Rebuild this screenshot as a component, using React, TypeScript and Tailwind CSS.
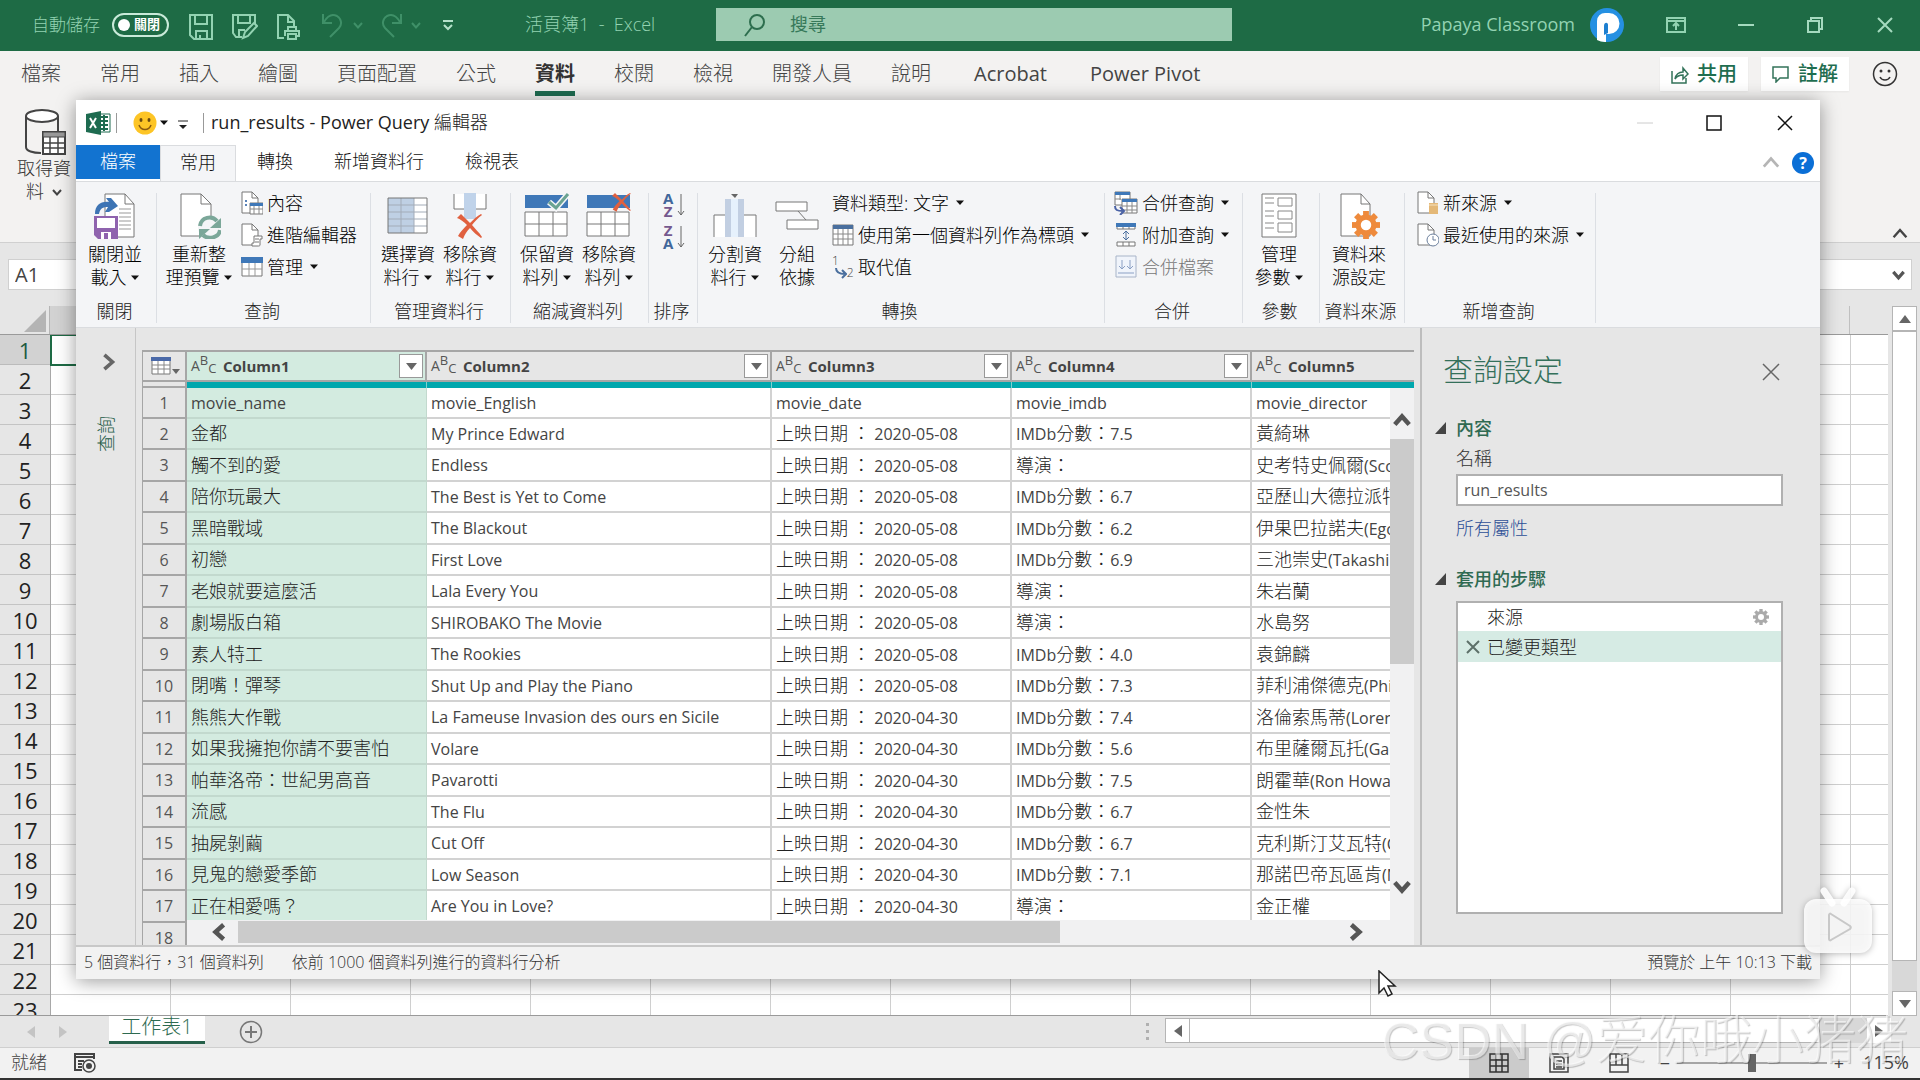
import React from "react";

const Caret = () => (
  <svg width="10" height="6" viewBox="0 0 10 6" className="inline-block shrink-0 align-middle" aria-hidden="true">
    <path d="M1 0.5h8L5 5z" fill="#111" />
  </svg>
);

const Chevron = ({ dir, size, color, width }: { dir: "up" | "down" | "left" | "right"; size: number; color: string; width: number }) => {
  const d = { up: "M2 14l8-9 8 9", down: "M2 6l8 9 8-9", left: "M14 2l-9 8 9 8", right: "M6 2l9 8-9 8" }[dir];
  return (
    <svg width={size} height={size} viewBox="0 0 20 20" fill="none" stroke={color} strokeWidth={width} className="shrink-0" aria-hidden="true">
      <path d={d} />
    </svg>
  );
};

const Tri = ({ dir, color = "#666" }: { dir: "up" | "down" | "left" | "right"; color?: string }) => {
  const d = { up: "M0 10L6 2l6 8z", down: "M0 2h12L6 10z", left: "M10 0v12L2 6z", right: "M2 0v12l8-6z" }[dir];
  return (
    <svg width="12" height="12" viewBox="0 0 12 12" className="shrink-0" aria-hidden="true">
      <path d={d} fill={color} />
    </svg>
  );
};

const Icon = ({ w, h, children }: { w: number; h: number; children: React.ReactNode }) => (
  <svg width={w} height={h} viewBox={`0 0 ${w} ${h}`} fill="none" className="shrink-0" aria-hidden="true">
    {children}
  </svg>
);

/* ---------- Excel title bar ---------- */

const titleIcons = [
  {
    name: "儲存",
    icon: (
      <Icon w={24} h={26}>
        <path d="M1 1h22v24H5l-4-4zM6 1v9h12V1M7 25v-8h11v8M11 25v-4" stroke="#93d3b2" strokeWidth="2" />
      </Icon>
    ),
  },
  {
    name: "另存新檔",
    icon: (
      <Icon w={26} h={26}>
        <path d="M10 23H4l-3-4V1h22v9M6 1v8h12V1M7 23v-7h6" stroke="#93d3b2" strokeWidth="2" />
        <path d="M11 24l2-6 9-9 3 3-9 10z" stroke="#93d3b2" strokeWidth="2" />
      </Icon>
    ),
  },
  {
    name: "預覽列印",
    icon: (
      <Icon w={24} h={26}>
        <path d="M7 24H1V1h10l6 6v5M11 1v7h6" stroke="#93d3b2" strokeWidth="2" />
        <path d="M11 17v-4h8v4M8 22v-5h14v5h-3M11 20h8v5h-8z" stroke="#93d3b2" strokeWidth="2" />
      </Icon>
    ),
  },
];

function TitleBar() {
  return (
    <header className="flex h-[51px] shrink-0 items-center bg-[#1e6b45] pb-[2px] pl-8 text-[18px] text-[#93d3b2]">
      <span className="text-[17px] font-light">自動儲存</span>
      <button aria-label="自動儲存 關閉" className="ml-3 flex h-6 w-[57px] items-center gap-1 rounded-full border-2 border-[#c9ead9] pl-1 text-[13px] leading-none font-bold text-white">
        <span className="size-3 rounded-full bg-white" />
        關閉
      </button>
      <div className="ml-5 flex items-center gap-[19px] pt-1">
        {titleIcons.map((t) => (
          <button key={t.name} aria-label={t.name}>
            {t.icon}
          </button>
        ))}
      </div>
      <button aria-label="復原" className="ml-5 flex items-center gap-2">
        <Icon w={24} h={26}>
          <path d="M2 2v9h9M3 10c4-7 9-8 13-6 5 3 5 9 2 12l-9 9" stroke="#3f9068" strokeWidth="2" />
        </Icon>
        <Chevron dir="down" size={10} color="#3f9068" width={4} />
      </button>
      <button aria-label="取消復原" className="ml-4 flex items-center gap-2">
        <Icon w={24} h={26}>
          <path d="M22 2v9h-9M21 10C17 3 12 2 8 4c-5 3-5 9-2 12l9 9" stroke="#3f9068" strokeWidth="2" />
        </Icon>
        <Chevron dir="down" size={10} color="#3f9068" width={4} />
      </button>
      <button aria-label="自訂快速存取工具列" className="ml-5">
        <Icon w={14} h={12}>
          <path d="M2 2h10M3 6l4 4 4-4" stroke="#b5e2cb" strokeWidth="2" />
        </Icon>
      </button>
      <span className="ml-[70px] w-[191px] font-light whitespace-pre">活頁簿1  -  Excel</span>
      <label className="flex h-[33px] w-[516px] items-center bg-[#9ccbb1] pl-7">
        <Icon w={22} h={24}>
          <circle cx="13" cy="9" r="7" stroke="#2d6e4e" strokeWidth="2" />
          <path d="M8 14l-7 9" stroke="#2d6e4e" strokeWidth="2" />
        </Icon>
        <input aria-label="搜尋" placeholder="搜尋" className="ml-6 min-w-0 flex-1 bg-transparent outline-none placeholder:text-[#37795a]" />
      </label>
      <span className="ml-auto">Papaya Classroom</span>
      <svg width="36" height="36" viewBox="0 0 36 36" className="ml-[14px] shrink-0" aria-hidden="true">
        <circle cx="18" cy="18" r="17" fill="#2590e2" />
        <path d="M8 33V14a8 8 0 0 1 8-8h4a10 10 0 0 1 0 21h-3v8a17 17 0 0 1-9-2z" fill="#fff" />
        <path d="M15 28v-9c0-4 4-4 4-1v8z" fill="#1d7fd0" />
      </svg>
      <div className="ml-[41px] flex items-center pr-[27px]">
        <button aria-label="功能區顯示選項" className="w-[20px]">
          <Icon w={20} h={16}>
            <path d="M1 1h18v14H1zM1 4h18M10 13V6M7 9l3-3 3 3" stroke="#93d3b2" strokeWidth="2" />
          </Icon>
        </button>
        <button aria-label="最小化" className="ml-[52px] w-4">
          <Icon w={16} h={16}>
            <path d="M0 8h16" stroke="#a5dabf" strokeWidth="2" />
          </Icon>
        </button>
        <button aria-label="還原" className="ml-[53px] w-4">
          <Icon w={16} h={16}>
            <path d="M1 4h11v11H1zM4 4V1h11v11h-3" stroke="#a5dabf" strokeWidth="2" />
          </Icon>
        </button>
        <button aria-label="關閉" className="ml-[54px] w-4">
          <Icon w={16} h={16}>
            <path d="M1 1l14 14M15 1L1 15" stroke="#a5dabf" strokeWidth="2" />
          </Icon>
        </button>
      </div>
    </header>
  );
}

/* ---------- Excel ribbon ---------- */

const excelTabs = ["檔案", "常用", "插入", "繪圖", "頁面配置", "公式", "資料", "校閱", "檢視", "開發人員", "說明"];
const addInTabs = ["Acrobat", "Power Pivot"];

function ExcelRibbon() {
  return (
    <div className="flex h-[192px] shrink-0 flex-col border-b border-[#d0d0d0] bg-[#f3f2f1]">
      <nav className="flex h-[46px] items-center pr-[22px] pl-[21px] text-[20px] text-[#444]">
        <div className="flex h-full gap-[39px]">
          {excelTabs.map((t) => (
            <button
              key={t}
              className={
                t === "資料"
                  ? "h-[45px] border-b-[5px] border-[#1e6b50] pt-[5px] leading-8 font-bold text-[#333]"
                  : "h-[45px] border-b-[5px] border-transparent pt-[5px] leading-8 font-light"
              }
            >
              {t}
            </button>
          ))}
          {addInTabs.map((t) => (
            <button key={t} className="ml-1 h-[45px] border-b-[5px] border-transparent pt-[5px] leading-8">
              {t}
            </button>
          ))}
        </div>
        <button className="ml-auto flex h-[34px] items-center gap-2 bg-white px-[11px] font-medium text-[#1f6e50] shadow-xs">
          <Icon w={18} h={20}>
            <path d="M1 7v12h14v-5M4 15c1-5 4-7 8-7V4l5 6-5 5v-4c-4 0-6 1-8 4z" stroke="#33735a" strokeWidth="1.5" />
          </Icon>
          共用
        </button>
        <button className="ml-[13px] flex h-[34px] items-center gap-2 bg-white px-[11px] font-medium text-[#1f6e50] shadow-xs">
          <Icon w={18} h={18}>
            <path d="M1 2h15v11H8l-4 4v-4H1z" stroke="#33735a" strokeWidth="1.5" />
          </Icon>
          註解
        </button>
        <button aria-label="意見反應" className="ml-[23px]">
          <Icon w={26} h={26}>
            <circle cx="13" cy="13" r="11.5" stroke="#333" strokeWidth="1.5" />
            <circle cx="9" cy="10" r="1.5" fill="#333" />
            <circle cx="17" cy="10" r="1.5" fill="#333" />
            <path d="M8 16c2 4 8 4 10 0" stroke="#333" strokeWidth="1.5" />
          </Icon>
        </button>
      </nav>
      <div className="flex flex-1 items-start justify-between pt-3 pr-3 pl-4">
        <button className="flex w-14 flex-col items-center text-[18px] leading-[23px] font-light text-[#333]">
          <Icon w={44} h={48}>
            <path d="M4 7v31c0 4 7 6 15 6M36 7v17" stroke="#444" strokeWidth="2" />
            <ellipse cx="20" cy="7" rx="16" ry="6" stroke="#444" strokeWidth="2" fill="#fff" />
            <path d="M21 23h22v22H21z" fill="#fff" stroke="#444" strokeWidth="2" />
            <path d="M21 23h22v5H21z" fill="#999" stroke="#444" />
            <path d="M21 34h22M21 39h22M28 28v17M36 28v17" stroke="#444" strokeWidth="1.5" />
          </Icon>
          <span className="whitespace-nowrap">取得資</span>
          <span className="flex items-center gap-2">
            料 <Chevron dir="down" size={10} color="#444" width={4} />
          </span>
        </button>
        <button aria-label="摺疊功能區" className="self-end">
          <Chevron dir="up" size={16} color="#444" width={3} />
        </button>
      </div>
    </div>
  );
}

const sheetRows = Array.from({ length: 23 }, (_, i) => i + 1);

function Sheet() {
  return (
    <main className="flex min-h-0 flex-1 flex-col bg-[#e6e6e6]">
      <div className="flex h-[63px] shrink-0 items-start px-2 pt-4">
        <input aria-label="名稱方塊" defaultValue="A1" className="h-[31px] w-[160px] border border-[#d0d0d0] bg-white pl-[6px] text-[20px] text-[#444]" />
        <div className="ml-2 flex h-[31px] flex-1 items-center justify-end border border-[#d0d0d0] bg-white pr-[6px]">
          <Chevron dir="down" size={13} color="#555" width={5} />
        </div>
      </div>
      <div className="flex min-h-0 flex-1">
        <div className="flex min-w-0 flex-1 flex-col">
          <div className="flex h-[29px] shrink-0 border-b border-[#9a9a9a]">
            <div className="flex w-[50px] items-end justify-end border-r border-[#b5b5b5] pr-[3px] pb-[2px]">
              <svg width="22" height="22" viewBox="0 0 22 22" aria-hidden="true">
                <path d="M22 0v22H0z" fill="#b4b4b4" />
              </svg>
            </div>
            <div className="w-[120px] bg-[#d2d2d2]" />
            <div className="flex-1 bg-[linear-gradient(to_right,transparent_119px,#c0c0c0_119px)] bg-[size:120px_30px]" />
          </div>
          <div className="flex min-h-0 flex-1 overflow-hidden border-b border-[#9a9a9a]">
            <div className="w-[51px] shrink-0 border-r border-[#a8a8a8]">
              {sheetRows.map((n) => (
                <div
                  key={n}
                  className={
                    n === 1
                      ? "h-[30px] border-b border-[#bbb] bg-[#d2d2d2] text-center text-[22px] leading-[30px] text-[#1e5b40]"
                      : "h-[30px] border-b border-[#c4c4c4] text-center text-[22px] leading-[30px] text-[#222]"
                  }
                >
                  {n}
                </div>
              ))}
            </div>
            <div className="relative flex-1 bg-white">
              <div className="h-full bg-[linear-gradient(to_right,transparent_119px,#cfcfcf_119px),linear-gradient(to_bottom,transparent_29px,#cfcfcf_29px)] bg-[size:120px_30px]" />
              <div className="absolute -top-px -left-px h-8 w-[122px] border-2 border-[#1e6b45]" />
            </div>
          </div>
        </div>
        <div className="ml-1 flex w-[25px] shrink-0 flex-col">
          <div className="flex h-[25px] items-center justify-center border border-[#b5b5b5] bg-white">
            <Tri dir="up" />
          </div>
          <div className="flex-1 border border-[#b5b5b5] bg-white" />
          <div className="h-[30px] bg-[#d8d8d8]" />
          <div className="flex h-[25px] items-center justify-center border border-[#b5b5b5] bg-white">
            <Tri dir="down" />
          </div>
        </div>
        <div className="w-[3px]" />
      </div>
      <div className="flex h-[31px] shrink-0 items-start">
        <div className="flex h-full w-[109px] items-center gap-5 pl-[25px]">
          <Tri dir="left" color="#c4c4c4" />
          <Tri dir="right" color="#c4c4c4" />
        </div>
        <button className="h-7 w-24 border-b-[3px] border-[#26604a] bg-white pb-1 text-[20px] leading-5 font-light text-[#2d6a50]">工作表1</button>
        <button aria-label="新工作表" className="ml-[34px] self-center">
          <Icon w={24} h={24}>
            <circle cx="12" cy="12" r="10.5" stroke="#777" strokeWidth="1.5" />
            <path d="M6 12h12M12 6v12" stroke="#777" strokeWidth="2" />
          </Icon>
        </button>
        <div className="ml-auto flex w-[776px] items-center">
          <Icon w={8} h={24}>
            <path d="M2 5h3v3H2zM2 12h3v3H2zM2 19h3v3H2z" fill="#b0b0b0" />
          </Icon>
          <div className="mt-[2px] ml-[13px] flex h-[25px] flex-1 items-stretch pr-[29px]">
            <div className="flex w-[25px] items-center justify-center border border-[#b5b5b5] bg-white">
              <Tri dir="left" />
            </div>
            <div className="flex-1 border border-l-0 border-[#b5b5b5] bg-white" />
            <div className="w-[47px] bg-[#d8d8d8]" />
            <div className="flex w-6 items-center justify-center bg-white">
              <Tri dir="right" />
            </div>
          </div>
        </div>
      </div>
    </main>
  );
}

function ExcelStatus() {
  return (
    <footer className="flex h-[33px] shrink-0 items-stretch border-t border-b-2 border-t-[#cfcfcf] border-b-[#333] bg-[#f2f2f2] pr-[11px] pl-[11px] text-[18px] leading-[29px] text-[#444]">
      <span className="font-light">就緒</span>
      <button aria-label="巨集錄製" className="ml-[27px]">
        <Icon w={22} h={20}>
          <path d="M8 17H1V1h19v5M1 4h19M4 8h6M4 11h4M4 14h4" stroke="#444" strokeWidth="2" />
          <circle cx="15" cy="13" r="6" stroke="#444" strokeWidth="1.5" />
          <circle cx="15" cy="13" r="3" fill="#444" />
        </Icon>
      </button>
      <button aria-label="標準模式" className="ml-auto flex w-[60px] items-center justify-center bg-[#cbcbcb]">
        <Icon w={20} h={20}>
          <path d="M1 1h18v18H1zM7 1v18M13 1v18M1 7h18M1 13h18" stroke="#333" strokeWidth="1.5" />
        </Icon>
      </button>
      <button aria-label="整頁模式" className="flex w-[60px] items-center justify-center">
        <Icon w={20} h={20}>
          <path d="M1 1h18v18H1zM5 4h8l2 2v10H5zM7 8h6M7 11h6M7 14h6" stroke="#444" strokeWidth="1.5" />
        </Icon>
      </button>
      <button aria-label="分頁預覽" className="flex w-[60px] items-center justify-center">
        <Icon w={20} h={20}>
          <path d="M1 1h18v18H1zM1 12h18M7 1v11M13 1v11" stroke="#444" strokeWidth="1.5" />
        </Icon>
      </button>
      <button aria-label="縮小" className="ml-2 w-4 text-center">
        −
      </button>
      <input
        type="range"
        aria-label="顯示比例"
        min={0}
        max={100}
        defaultValue={50}
        className="mx-1 my-auto h-[2px] w-[150px] appearance-none bg-[#a5a5a5] [&::-webkit-slider-thumb]:h-[18px] [&::-webkit-slider-thumb]:w-2 [&::-webkit-slider-thumb]:appearance-none [&::-webkit-slider-thumb]:bg-[#666]"
      />
      <button aria-label="放大" className="w-4 text-center">
        +
      </button>
      <span className="w-[62px] text-right">115%</span>
    </footer>
  );
}

/* ---------- Power Query ribbon icons ---------- */

const CloseLoad = () => (
  <Icon w={44} h={46}>
    <path d="M12 1h20l9 10v33H12z" fill="#fff" stroke="#777" />
    <path d="M32 1v10h9" stroke="#777" />
    <path d="M26 16h12M26 20h12M26 24h12M26 28h12M26 32h12M26 36h12" stroke="#999" />
    <path d="M2 21c0-9 6-13 14-12l-3-4h5l7 8-9 6h-4l3-5c-5 0-8 1-9 7z" fill="#3d74b4" />
    <path d="M1 23h24v23H5l-4-4z" fill="#8f63ae" />
    <path d="M4 25h18v10H4zM8 39h10v7H8z" fill="#fff" />
    <path d="M11 40h4v6h-4z" fill="#8f63ae" />
  </Icon>
);
const Refresh = () => (
  <Icon w={44} h={46}>
    <path d="M4 1h20l10 10v32H4z" fill="#fff" stroke="#777" />
    <path d="M24 1v10h10" stroke="#777" />
    <circle cx="33" cy="35" r="12" fill="#f4f5f7" />
    <path d="M23 33c1-9 12-11 17-5" stroke="#7ba799" strokeWidth="4" />
    <path d="M44 25v10H33z" fill="#7ba799" />
    <path d="M43 37c-1 8-12 10-17 5" stroke="#7ba799" strokeWidth="4" />
    <path d="M22 46V36h11z" fill="#7ba799" />
  </Icon>
);
const ChooseCols = () => (
  <Icon w={44} h={46}>
    <path d="M2 5h39v35H2z" fill="#fff" />
    <path d="M2 5h26v35H2z" fill="#bfd0e4" />
    <path d="M2 12h39M2 19h39M2 26h39M2 33h39M15 5v35M28 5v35" stroke="#a3acb8" />
    <path d="M2 5h39v35H2z" stroke="#777" />
  </Icon>
);
const Cross = ({ x, y, s }: { x: number; y: number; s: number }) => (
  <path
    transform={`translate(${x} ${y}) scale(${s})`}
    d="M0 4l4-4c3 3 6 6 9 9 4-4 7-7 11-9l1 1c-4 3-7 6-10 10 3 4 7 7 10 12l-1 1c-4-3-8-6-11-10-3 3-5 6-7 11l-5-3c2-4 6-8 9-11-3-3-7-6-10-7z"
    fill="#e0603f"
  />
);
const RemoveCols = () => (
  <Icon w={44} h={46}>
    <path d="M6 1v15h11V1M27 1v15h11V1" fill="#fff" />
    <path d="M6 1v15h11M38 1v15H27" stroke="#777" />
    <path d="M16 0h12v26H16z" fill="#c0d3ea" />
    <Cross x={9} y={21} s={1} />
  </Icon>
);
const RowsGrid = () => (
  <>
    <path d="M1 2h43v13H1z" fill="#3f78b8" />
    <path d="M1 19h42v24H1z" fill="#fff" stroke="#777" />
    <path d="M1 31h42M15 19v24M29 19v24" stroke="#777" />
  </>
);
const KeepRows = () => (
  <Icon w={46} h={46}>
    <RowsGrid />
    <path d="M25 9l7 6L44 1" stroke="#f4f5f7" strokeWidth="6" />
    <path d="M25 9l7 6L44 1" stroke="#6aa392" strokeWidth="3" />
  </Icon>
);
const RemoveRows = () => (
  <Icon w={46} h={46}>
    <RowsGrid />
    <Cross x={26} y={0} s={0.75} />
  </Icon>
);
const SplitCol = () => (
  <Icon w={44} h={46}>
    <path d="M1 44V22h12v22M31 44V22h12v22" fill="#fff" />
    <path d="M1 44V22h12M43 44V22H31" stroke="#777" />
    <path d="M12 6h19v38H12z" fill="#e6f1fc" />
    <path d="M12 6h6v38h-6zM25 6h6v38h-6z" fill="#c2cfe2" />
    <path d="M18 1h7l-3 4z" fill="#666" />
  </Icon>
);
const GroupBy = () => (
  <Icon w={44} h={46}>
    <path d="M1 9h31v9H1zM12 27h31v9H12z" fill="#fff" stroke="#777" />
    <path d="M23 18l8 9" stroke="#777" />
  </Icon>
);
const Params = () => (
  <Icon w={36} h={46}>
    <path d="M1 1h34v43H1z" fill="#fff" stroke="#777" />
    <path d="M4 5h9M4 10h9M4 18h9M4 23h9M4 30h9M4 35h9" stroke="#888" />
    <path d="M17 5h14v8H17zM17 18h14v8H17zM17 30h14v9H17z" stroke="#888" />
  </Icon>
);
const Gear = ({ x, y, r, color }: { x: number; y: number; r: number; color: string }) => (
  <g transform={`translate(${x} ${y}) scale(${r / 12})`}>
    {[0, 45, 90, 135].map((a) => (
      <path key={a} d="M-2.500 -12h5v24h-5z" fill={color} transform={`rotate(${a})`} />
    ))}
    <circle r="9" fill={color} />
    <circle r="4.500" fill="#fff" />
  </g>
);
const SourceSet = () => (
  <Icon w={44} h={46}>
    <path d="M4 1h20l9 10v32H4z" fill="#fff" stroke="#777" />
    <path d="M24 1v10h9" stroke="#777" />
    <Gear x={29} y={32} r={14} color="#ee8a3c" />
  </Icon>
);

const SmallPage = ({ children }: { children?: React.ReactNode }) => (
  <Icon w={22} h={24}>
    <path d="M1 1h10l6 6v15H1z" fill="#fff" stroke="#777" />
    <path d="M11 1v6h6" stroke="#777" />
    {children}
  </Icon>
);
const PropsIcon = () => (
  <SmallPage>
    <path d="M4 10h2M4 14h2" stroke="#5a83b8" strokeWidth="2" />
    <path d="M9 12h13v11H9z" fill="#fff" stroke="#777" />
    <path d="M9 12h13v3H9z" fill="#3f78b8" />
    <path d="M9 18h13M13 15v8M18 15v8" stroke="#888" />
  </SmallPage>
);
const EditorIcon = () => (
  <SmallPage>
    <path d="M13 13h8v3h-2v6c0 1-1 1-2 1h-6v-3h2z" fill="#fff" stroke="#777" />
    <path d="M14 16h4M14 19h4" stroke="#777" />
  </SmallPage>
);
const TableIcon = () => (
  <Icon w={22} h={20}>
    <path d="M1 1h20v18H1z" fill="#fff" stroke="#777" />
    <path d="M0 0h22v6H0z" fill="#3f78b8" />
    <path d="M1 12h20M8 6v13M14 6v13" stroke="#999" />
  </Icon>
);
const HeaderIcon = () => (
  <Icon w={22} h={22}>
    <path d="M1 1h20v20H1z" fill="#fff" stroke="#777" />
    <path d="M1 1h20v4H1z" fill="#4a6f9e" />
    <path d="M1 10h20M1 15h20M6 5v16M11 5v16M16 5v16" stroke="#888" />
  </Icon>
);
const ReplaceIcon = () => (
  <span className="flex h-6 w-[22px] shrink-0 text-[12px] leading-3 text-[#444]">
    <span>1</span>
    <svg width="12" height="24" viewBox="0 0 12 24" fill="none" className="-ml-1" aria-hidden="true">
      <path d="M1 13c0 4 3 6 9 6M7 15l4 4-4 4" stroke="#4a6f9e" strokeWidth="2" />
    </svg>
    <span className="self-end">2</span>
  </span>
);
const MergeIcon = () => (
  <Icon w={24} h={24}>
    <path d="M1 1h15v13H1z" fill="#fff" stroke="#777" />
    <path d="M1 1h15v3H1z" fill="#3f78b8" />
    <path d="M1 8h6M6 4v5" stroke="#888" />
    <path d="M8 8h15v14H8z" fill="#fff" stroke="#777" />
    <path d="M8 8h15v3H8z" fill="#3f78b8" />
    <path d="M8 15h15M8 19h15M13 11v11M18 11v11" stroke="#888" />
    <path d="M1 15c0 4 2 5 8 5M6 16l4 4-4 4" stroke="#4b63a6" strokeWidth="2" />
  </Icon>
);
const AppendIcon = () => (
  <Icon w={24} h={24}>
    <path d="M3 1h18v5H3zM3 19h18v4H3z" fill="#fff" stroke="#777" />
    <path d="M2 0h20v4H2z" fill="#3f78b8" />
    <path d="M9 4v2M15 4v2M9 19v4M15 19v4" stroke="#777" />
    <path d="M12 8v9M9 11l3-3 3 3M9 14l3 3 3-3" stroke="#4a6f9e" />
  </Icon>
);
const CombineIcon = () => (
  <Icon w={24} h={24}>
    <path d="M2 1h20v21H2z" fill="#f0f4fb" stroke="#a8b4c8" />
    <path d="M8 5v9M5 11l3 3 3-3M16 5v9M13 11l3 3 3-3M4 18h16" stroke="#8ba0c4" />
  </Icon>
);
const NewSourceIcon = () => (
  <SmallPage>
    <path d="M12 12h9v11h-9z" fill="#e4b877" />
    <path d="M12 14h9" stroke="#f6e2c0" />
  </SmallPage>
);
const RecentIcon = () => (
  <SmallPage>
    <circle cx="16" cy="17" r="6" fill="#fff" stroke="#6b7f9c" />
    <path d="M16 13v4h3" stroke="#6b7f9c" />
  </SmallPage>
);

const SortIcon = ({ letters }: { letters: string[] }) => (
  <span className="flex h-[26px] items-center gap-1">
    <span className="flex flex-col text-[15px] leading-[13px] font-bold">
      {letters.map((l) => (
        <span key={l} className={l === "A" ? "text-[#41679b]" : "text-[#75598f]"}>
          {l}
        </span>
      ))}
    </span>
    <svg width="8" height="24" viewBox="0 0 8 24" fill="none" aria-hidden="true">
      <path d="M4 1v21M1 18l3 4 3-4" stroke="#666" />
    </svg>
  </span>
);

function Big({ icon, lines, caret }: { icon: React.ReactNode; lines: [string, string]; caret?: boolean }) {
  return (
    <button className="flex w-[62px] flex-col items-center leading-[23px] whitespace-nowrap">
      <span className="mb-[3px] flex h-[47px] items-start">{icon}</span>
      <span>{lines[0]}</span>
      <span className="flex items-center gap-[3px]">
        {lines[1]}
        {caret && <Caret />}
      </span>
    </button>
  );
}

function Small({ icon, text, caret, muted }: { icon?: React.ReactNode; text: string; caret?: boolean; muted?: boolean }) {
  return (
    <button disabled={muted} className={muted ? "flex h-8 items-center gap-1 whitespace-nowrap text-[#777]" : "flex h-8 items-center gap-1 whitespace-nowrap"}>
      {icon}
      {text}
      {caret && (
        <span className="ml-[2px] flex">
          <Caret />
        </span>
      )}
    </button>
  );
}

function SmallList({ className, children }: { className: string; children: React.ReactNode }) {
  return <div className={`-mt-[6px] flex flex-col ${className}`}>{children}</div>;
}

function Group({ label, width, pad, children }: { label: string; width: string; pad: string; children: React.ReactNode }) {
  return (
    <section aria-label={label} className={`flex shrink-0 flex-col border-r border-[#dcdfe4] ${width}`}>
      <div className={`flex flex-1 items-start ${pad}`}>{children}</div>
      <div className="pr-[3px] text-center leading-6 text-[#222]">{label}</div>
    </section>
  );
}

function QueryRibbon() {
  return (
    <div className="flex h-[147px] shrink-0 border-t border-b border-[#dadcdf] bg-[#f4f5f7] pt-[11px] pb-1 text-[18px] font-light text-[#000]">
      <Group label="關閉" width="w-[81px]" pad="pl-2">
        <Big icon={<CloseLoad />} lines={["關閉並", "載入"]} caret />
      </Group>
      <Group label="查詢" width="w-[214px]" pad="pl-[11px]">
        <Big icon={<Refresh />} lines={["重新整", "理預覽"]} caret />
        <SmallList className="ml-[11px]">
          <Small icon={<PropsIcon />} text="內容" />
          <Small icon={<EditorIcon />} text="進階編輯器" />
          <Small icon={<TableIcon />} text="管理" caret />
        </SmallList>
      </Group>
      <Group label="管理資料行" width="w-[140px]" pad="pl-[6px]">
        <Big icon={<ChooseCols />} lines={["選擇資", "料行"]} caret />
        <Big icon={<RemoveCols />} lines={["移除資", "料行"]} caret />
      </Group>
      <Group label="縮減資料列" width="w-[138px]" pad="pl-[5px]">
        <Big icon={<KeepRows />} lines={["保留資", "料列"]} caret />
        <Big icon={<RemoveRows />} lines={["移除資", "料列"]} caret />
      </Group>
      <Group label="排序" width="w-[49px]" pad="pl-[14px]">
        <div className="-mt-px flex flex-col gap-[6px]">
          <button aria-label="遞增排序">
            <SortIcon letters={["A", "Z"]} />
          </button>
          <button aria-label="遞減排序">
            <SortIcon letters={["Z", "A"]} />
          </button>
        </div>
      </Group>
      <Group label="轉換" width="w-[407px]" pad="pl-[6px]">
        <Big icon={<SplitCol />} lines={["分割資", "料行"]} caret />
        <Big icon={<GroupBy />} lines={["分組", "依據"]} />
        <SmallList className="ml-1">
          <Small text="資料類型: 文字" caret />
          <Small icon={<HeaderIcon />} text="使用第一個資料列作為標頭" caret />
          <Small icon={<ReplaceIcon />} text="取代值" />
        </SmallList>
      </Group>
      <Group label="合併" width="w-[138px]" pad="pl-[9px]">
        <SmallList className="">
          <Small icon={<MergeIcon />} text="合併查詢" caret />
          <Small icon={<AppendIcon />} text="附加查詢" caret />
          <Small icon={<CombineIcon />} text="合併檔案" muted />
        </SmallList>
      </Group>
      <Group label="參數" width="w-[77px]" pad="pl-[5px]">
        <Big icon={<Params />} lines={["管理", "參數"]} caret />
      </Group>
      <Group label="資料來源" width="w-[85px]" pad="pl-2">
        <Big icon={<SourceSet />} lines={["資料來", "源設定"]} />
      </Group>
      <Group label="新增查詢" width="w-[191px]" pad="pl-3">
        <SmallList className="">
          <Small icon={<NewSourceIcon />} text="新來源" caret />
          <Small icon={<RecentIcon />} text="最近使用的來源" caret />
        </SmallList>
      </Group>
    </div>
  );
}

/* ---------- Power Query data grid ---------- */

const D8 = "上映日期 ： 2020-05-08";
const D30 = "上映日期 ： 2020-04-30";

const rows: string[][] = [
  ["movie_name", "movie_English", "movie_date", "movie_imdb", "movie_director"],
  ["金都", "My Prince Edward", D8, "IMDb分數：7.5", "黃綺琳"],
  ["觸不到的愛", "Endless", D8, "導演：", "史考特史佩爾(Scott Speer)"],
  ["陪你玩最大", "The Best is Yet to Come", D8, "IMDb分數：6.7", "亞歷山大德拉派特"],
  ["黑暗戰域", "The Blackout", D8, "IMDb分數：6.2", "伊果巴拉諾夫(Egor"],
  ["初戀", "First Love", D8, "IMDb分數：6.9", "三池崇史(Takashi"],
  ["老娘就要這麼活", "Lala Every You", D8, "導演：", "朱岩蘭"],
  ["劇場版白箱", "SHIROBAKO The Movie", D8, "導演：", "水島努"],
  ["素人特工", "The Rookies", D8, "IMDb分數：4.0", "袁錦麟"],
  ["閉嘴！彈琴", "Shut Up and Play the Piano", D8, "IMDb分數：7.3", "菲利浦傑德克(Philipp"],
  ["熊熊大作戰", "La Fameuse Invasion des ours en Sicile", D30, "IMDb分數：7.4", "洛倫索馬蒂(Lorenzo"],
  ["如果我擁抱你請不要害怕", "Volare", D30, "IMDb分數：5.6", "布里薩爾瓦托(Gabriele"],
  ["帕華洛帝：世紀男高音", "Pavarotti", D30, "IMDb分數：7.5", "朗霍華(Ron Howard)"],
  ["流感", "The Flu", D30, "IMDb分數：6.7", "金性朱"],
  ["抽屍剝繭", "Cut Off", D30, "IMDb分數：6.7", "克利斯汀艾瓦特(Ch"],
  ["見鬼的戀愛季節", "Low Season", D30, "IMDb分數：7.1", "那諾巴帝瓦區肯(Na"],
  ["正在相愛嗎？", "Are You in Love?", D30, "導演：", "金正權"],
  ["", "", "", "", ""],
];

/* Latin runs are set one step smaller than the CJK glyphs beside them. */
const Mixed = ({ text }: { text: string }) => (
  <>
    {text
      .split(/([\x20-\x7e]+)/)
      .filter(Boolean)
      .map((part, i) => (
        <span key={i} className={/^[\x20-\x7e]/.test(part) ? "text-[16px]" : "text-[18px] font-light text-[#222]"}>
          {part}
        </span>
      ))}
  </>
);

function DataGrid() {
  return (
    <div className="relative min-h-0 flex-1 overflow-hidden border-t-2 border-l border-[#a6a6a6] bg-[#f1f1f2]">
      <table className="w-[1371px] table-fixed border-separate border-spacing-0 text-left text-[#444]">
        <colgroup>
          <col className="w-11" />
          <col className="w-[240px]" />
          <col className="w-[345px]" />
          <col className="w-[240px]" />
          <col className="w-[240px]" />
          <col />
        </colgroup>
        <thead>
          <tr className="h-[30px]">
            <th className="border-r-2 border-b-2 border-[#a6a6a6] bg-[#e6e6e6] p-0">
              <button aria-label="表格選項" className="ml-2 block">
                <Icon w={30} h={18}>
                  <path d="M1 1h18v16H1z" fill="#fff" stroke="#777" />
                  <path d="M0 0h20v4H0z" fill="#4a69a8" />
                  <path d="M1 8h18M1 12h18M7 4v13M13 4v13" stroke="#888" />
                  <path d="M21 12h8l-4 5z" fill="#666" />
                </Icon>
              </button>
            </th>
            {[1, 2, 3, 4, 5].map((n) => (
              <th key={n} className={n === 1 ? "border-r-2 border-b-2 border-[#a6a6a6] bg-[#d3ebe0] p-0" : "border-r-2 border-b-2 border-[#a6a6a6] bg-[#e6e6e6] p-0"}>
                <div className="flex h-7 items-center pr-[2px] pl-1 text-[15px] leading-6 font-bold">
                  <span className="flex h-5 w-8 text-[13px] leading-4 font-normal text-[#555]">
                    <span className="self-center text-[14px]">A</span>
                    <span className="-mt-1">B</span>
                    <span className="self-end">C</span>
                  </span>
                  Column{n}
                  <button aria-label={`篩選 Column${n}`} className="ml-auto flex size-6 items-center justify-center border border-[#999] bg-white">
                    <svg width="11" height="7" viewBox="0 0 11 7" aria-hidden="true">
                      <path d="M0 0h11L5.500 7z" fill="#666" />
                    </svg>
                  </button>
                </div>
              </th>
            ))}
          </tr>
          <tr className="h-[6px]">
            <td className="border-r-2 border-b-2 border-[#a6a6a6] bg-[#e6e6e6] p-0" />
            {[1, 2, 3, 4, 5].map((n) => (
              <td key={n} className="border-r border-[#7fd0d0] bg-[#00a7ad] p-0" />
            ))}
          </tr>
        </thead>
        <tbody>
          {rows.map((r, i) => (
            <tr key={i} className={i % 2 === 0 && i > 0 ? "h-8" : "h-[31px]"}>
              <th className="border-r-2 border-b-2 border-[#a6a6a6] bg-[#e6e6e6] p-0 text-center text-[16px] leading-7 font-normal text-[#555]">{i + 1}</th>
              {r.map((c, j) => (
                <td
                  key={j}
                  className={
                    j === 0
                      ? "overflow-hidden border-r border-b-2 border-[#c2d9ce] bg-[#d3ebe0] py-0 pr-0 pl-1 leading-7 whitespace-nowrap"
                      : "overflow-hidden border-r-2 border-b-2 border-[#d2d2d2] bg-white py-0 pr-0 pl-1 leading-7 whitespace-nowrap"
                  }
                >
                  <Mixed text={c} />
                </td>
              ))}
            </tr>
          ))}
        </tbody>
      </table>
      <div className="absolute top-9 right-0 bottom-[25px] flex w-6 flex-col items-center bg-[#f1f1f2] pt-6 pb-[25px]">
        <Chevron dir="up" size={18} color="#555" width={5} />
        <div className="mt-[9px] h-[225px] w-full bg-[#cbcbcb]" />
        <div className="mt-auto">
          <Chevron dir="down" size={18} color="#555" width={5} />
        </div>
      </div>
      <div className="absolute right-0 bottom-0 left-11 flex h-[25px] items-center bg-[#f1f1f2] pr-[50px] pb-[2px] pl-6">
        <Chevron dir="left" size={18} color="#555" width={5} />
        <div className="ml-[9px] h-[22px] w-[822px] bg-[#cbcbcb]" />
        <div className="ml-auto">
          <Chevron dir="right" size={18} color="#555" width={5} />
        </div>
      </div>
    </div>
  );
}

/* ---------- Power Query settings pane ---------- */

const PaneHeading = ({ text }: { text: string }) => (
  <h3 className="flex items-center gap-[10px] text-[18px] leading-6 font-medium text-[#2f6a52]">
    <svg width="11" height="12" viewBox="0 0 11 12" aria-hidden="true">
      <path d="M11 0v12H0z" fill="#444" />
    </svg>
    {text}
  </h3>
);

function Settings() {
  return (
    <aside className="flex w-[400px] shrink-0 flex-col border-l-2 border-[#bdbdbd] pr-[37px] pb-[31px] pl-[13px]">
      <div className="flex items-center justify-between pt-[22px] pr-[3px] pl-2">
        <h2 className="text-[30px] leading-10 font-light text-[#34705a]">查詢設定</h2>
        <button aria-label="關閉查詢設定" className="pt-1">
          <Icon w={18} h={18}>
            <path d="M1 1l16 16M17 1L1 17" stroke="#666" strokeWidth="1.5" />
          </Icon>
        </button>
      </div>
      <div className="mt-[26px]">
        <PaneHeading text="內容" />
      </div>
      <div className="ml-[21px] flex flex-col text-[18px] text-[#333]">
        <label htmlFor="query-name" className="mt-[6px] leading-6 font-light">
          名稱
        </label>
        <input id="query-name" defaultValue="run_results" className="mt-1 h-8 border-2 border-[#b0b0b0] bg-white pl-[6px] text-[16px] text-[#555]" />
        <a href="#properties" className="mt-[10px] self-start leading-6 font-light text-[#2d4f96]">
          所有屬性
        </a>
      </div>
      <div className="mt-[27px]">
        <PaneHeading text="套用的步驟" />
      </div>
      <ul className="mt-[10px] ml-[21px] flex-1 border-2 border-[#b0b0b0] bg-white text-[18px] leading-7 font-light text-[#222]">
        <li className="flex h-7 items-center justify-between pr-3 pl-[29px]">
          來源
          <button aria-label="編輯設定">
            <Icon w={16} h={16}>
              <Gear x={8} y={8} r={8} color="#aaa" />
            </Icon>
          </button>
        </li>
        <li className="flex h-[31px] items-center gap-[7px] bg-[#d6ebe4] pl-2">
          <Icon w={14} h={14}>
            <path d="M1 1l12 12M13 1L1 13" stroke="#5d7069" strokeWidth="2" />
          </Icon>
          已變更類型
        </li>
      </ul>
    </aside>
  );
}

function QueryEditor() {
  return (
    <div
      role="dialog"
      aria-label="Power Query 編輯器"
      className="absolute top-[100px] right-[100px] bottom-[101px] left-[76px] flex flex-col overflow-hidden bg-white shadow-[0_2px_18px_rgba(0,0,0,0.4)]"
    >
      <div className="flex h-[45px] shrink-0 items-center pr-[27px] pl-[10px] text-[18px] text-[#222]">
        <Icon w={25} h={24}>
          <path d="M12 3h12v18H12z" fill="#fff" stroke="#1e6b50" />
          <path d="M14 6h8M14 10h8M14 14h8M14 18h8M18 4v16" stroke="#1e6b50" strokeWidth="2" />
          <path d="M0 3l15-3v24L0 21z" fill="#1e6b50" />
          <path d="M4 7l6 10M10 7L4 17" stroke="#fff" strokeWidth="2" />
        </Icon>
        <div className="ml-[5px] h-5 w-px bg-[#999]" />
        <button aria-label="傳送意見" className="ml-4 flex items-center gap-[2px]">
          <Icon w={24} h={24}>
            <circle cx="12" cy="12" r="11.500" fill="#fdc526" />
            <ellipse cx="8" cy="9" rx="1.500" ry="2" fill="#6a4a10" />
            <ellipse cx="16" cy="9" rx="1.500" ry="2" fill="#6a4a10" />
            <path d="M6 14c2 6 10 6 12 0" stroke="#8a5a10" strokeWidth="1.500" />
          </Icon>
          <Caret />
        </button>
        <button aria-label="自訂工具列" className="ml-[9px] pt-1">
          <Icon w={10} h={10}>
            <path d="M0 1h10" stroke="#222" />
            <path d="M1 5h8L5 9z" fill="#222" />
          </Icon>
        </button>
        <div className="ml-[15px] h-5 w-px bg-[#999]" />
        <h1 className="ml-[7px]">
          run_results - Power Query <span className="font-light">編輯器</span>
        </h1>
        <div className="ml-auto flex items-center">
          <button aria-label="最小化">
            <Icon w={16} h={16}>
              <path d="M0 8h16" stroke="#ccc" />
            </Icon>
          </button>
          <button aria-label="最大化" className="ml-[53px]">
            <Icon w={16} h={16}>
              <path d="M1 1h14v14H1z" stroke="#111" strokeWidth="1.500" />
            </Icon>
          </button>
          <button aria-label="關閉視窗" className="ml-[55px]">
            <Icon w={16} h={16}>
              <path d="M1 1l14 14M15 1L1 15" stroke="#111" strokeWidth="1.500" />
            </Icon>
          </button>
        </div>
      </div>
      <nav className="flex h-9 shrink-0 items-start pr-[6px] text-[18px] leading-8 font-light text-[#111]">
        <button className="h-[34px] w-[84px] bg-[#1273d0] pb-[2px] text-white">檔案</button>
        <button className="-mb-px h-[37px] w-[76px] border border-b-0 border-[#dadcdf] bg-[#f4f5f7] pb-1">常用</button>
        <button className="ml-[21px]">轉換</button>
        <button className="ml-[41px]">新增資料行</button>
        <button className="ml-[41px]">檢視表</button>
        <div className="ml-auto flex h-9 items-center gap-3">
          <button aria-label="摺疊功能區">
            <Chevron dir="up" size={18} color="#b5b5b5" width={3} />
          </button>
          <button aria-label="說明" className="flex size-[22px] items-center justify-center rounded-full bg-[#0b6fd6] text-[16px] leading-none font-bold text-white">
            ?
          </button>
        </div>
      </nav>
      <QueryRibbon />
      <div className="flex min-h-0 flex-1 bg-[#e6e6e6]">
        <div className="flex w-[60px] shrink-0 flex-col items-center border-r border-[#c6c6c6] pt-[25px]">
          <button aria-label="展開查詢" className="ml-1">
            <Chevron dir="right" size={18} color="#666" width={4} />
          </button>
          <span className="mt-[51px] -rotate-90 text-[18px] leading-6 font-light whitespace-nowrap text-[#225a45]">查詢</span>
        </div>
        <div className="flex min-w-0 flex-1 pt-[22px] pr-[6px] pl-[6px]">
          <DataGrid />
        </div>
        <Settings />
      </div>
      <div className="flex h-[34px] shrink-0 items-center border-t-2 border-[#c8c8c8] bg-[#f2f2f2] px-2 pb-[3px] text-[16px] text-[#333]">
        <span className="font-light">5 個資料行，31 個資料列</span>
        <span className="ml-7 font-light">依前 1000 個資料列進行的資料行分析</span>
        <span className="ml-auto font-light">預覽於 上午 10:13 下載</span>
      </div>
    </div>
  );
}

export default function App() {
  return (
    <div className="relative flex h-screen flex-col overflow-hidden font-['Open_Sans','Noto_Sans_CJK_TC',sans-serif]">
      <TitleBar />
      <ExcelRibbon />
      <Sheet />
      <ExcelStatus />
      <QueryEditor />
      <svg width="70" height="68" viewBox="0 0 70 68" className="absolute right-[47px] bottom-[125px] drop-shadow-[0_1px_3px_rgba(0,0,0,0.3)]" aria-hidden="true">
        <path d="M21 4l8 12M49 4l-8 12" stroke="#fff" strokeOpacity="0.9" strokeWidth="7" strokeLinecap="round" />
        <rect x="1" y="12" width="68" height="54" rx="12" fill="#fff" fillOpacity="0.85" />
        <path d="M26 28v24c0 1 1 2 2 1l19-11c1-1 1-2 0-3L28 27c-1-1-2 0-2 1z" fill="#f4f4f4" stroke="#c8c8c8" strokeWidth="2" />
      </svg>
      <svg width="20" height="28" viewBox="0 0 20 28" className="absolute top-[970px] left-[1378px]" aria-hidden="true">
        <path d="M1 1v22l5-5 4 8 4-2-4-8h7z" fill="#fff" stroke="#222" strokeWidth="1.500" />
      </svg>
      <div className="pointer-events-none absolute right-[12px] bottom-[9px] font-['Liberation_Sans','Noto_Sans_CJK_SC',sans-serif] text-[52px] leading-[60px] font-light whitespace-nowrap text-white/60 [text-shadow:1px_1px_1px_rgba(0,0,0,0.22)]">
        CSDN @爱你哦小猪猪
      </div>
    </div>
  );
}
